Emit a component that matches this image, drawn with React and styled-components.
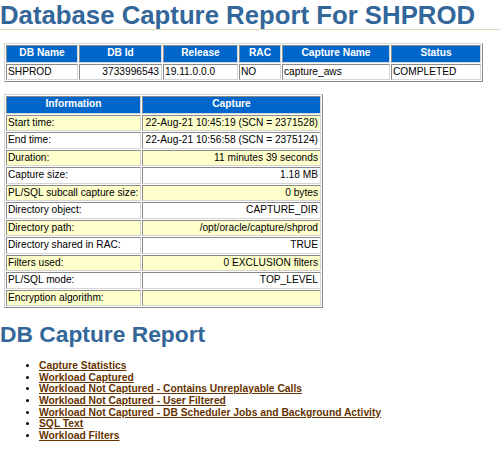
import React from "react";
import styled, { createGlobalStyle } from "styled-components";

const GlobalStyle = createGlobalStyle`
body {
  margin: 0;
  background: #ffffff;
  color: #000000;
  font-family: "Liberation Sans", Arial, Helvetica, sans-serif;
}
`;

const summaryCols = [
    { title: "DB Name", width: 72 },
    { title: "DB Id", width: 83, right: true },
    { title: "Release", width: 75 },
    { title: "RAC", width: 42 },
    { title: "Capture Name", width: 108 },
    { title: "Status", width: 90 },
];

const summaryRow = ["SHPROD", "3733996543", "19.11.0.0.0", "NO", "capture_aws", "COMPLETED"];

const infoRows = [
    ["Start time:", "22-Aug-21 10:45:19 (SCN = 2371528)"],
    ["End time:", "22-Aug-21 10:56:58 (SCN = 2375124)"],
    ["Duration:", "11 minutes 39 seconds"],
    ["Capture size:", "1.18 MB"],
    ["PL/SQL subcall capture size:", "0 bytes"],
    ["Directory object:", "CAPTURE_DIR"],
    ["Directory path:", "/opt/oracle/capture/shprod"],
    ["Directory shared in RAC:", "TRUE"],
    ["Filters used:", "0 EXCLUSION filters"],
    ["PL/SQL mode:", "TOP_LEVEL"],
    ["Encryption algorithm:", ""],
];

const links = [
    "Capture Statistics",
    "Workload Captured",
    "Workload Not Captured - Contains Unreplayable Calls",
    "Workload Not Captured - User Filtered",
    "Workload Not Captured - DB Scheduler Jobs and Background Activity",
    "SQL Text",
    "Workload Filters",
];

const App = () => {
    return (
        <>
        <GlobalStyle />
        <Title>Database Capture Report For SHPROD</Title>

        <Table $width={479} $top={13}>
            <tbody>
                <tr>
                    {summaryCols.map((c) => (
                        <Th key={c.title} $width={c.width}>{c.title}</Th>
                    ))}
                </tr>
                <tr>
                    {summaryRow.map((v, i) => (
                        <Td key={i} $right={summaryCols[i].right}>{v}</Td>
                    ))}
                </tr>
            </tbody>
        </Table>

        <Table $width={319} $top={12}>
            <tbody>
                <tr>
                    <Th $width={135}>Information</Th>
                    <Th $width={179}>Capture</Th>
                </tr>
                {infoRows.map((row, i) => (
                    <tr key={row[0]}>
                        <Td $shade={i % 2 === 0}>{row[0]}</Td>
                        <Td $shade={i % 2 === 0} $right>{row[1]}</Td>
                    </tr>
                ))}
            </tbody>
        </Table>

        <SubTitle>DB Capture Report</SubTitle>
        <LinkList>
            {links.map((l) => (
                <li key={l}><ReportLink href="#">{l}</ReportLink></li>
            ))}
        </LinkList>
        </>
    );
};

const Title = styled.h1`
margin: 0;
padding-top: 1px;
font-size: 25.75px;
font-weight: bold;
line-height: 28px;
color: #336699;
border-bottom: 1px solid #d9d9b6;
`;

const SubTitle = styled.h2`
margin: 13px 0 0 0;
font-size: 22.8px;
font-weight: bold;
line-height: 26px;
color: #336699;
`;

const Table = styled.table`
margin-top: ${(p) => p.$top}px;
margin-left: 4px;
width: ${(p) => p.$width}px;
table-layout: fixed;
border-collapse: separate;
border-spacing: 1px;
border: 1px solid;
border-color: #d4d4d4 #8a8a8a #8a8a8a #d4d4d4;
`;

const Th = styled.th`
box-sizing: border-box;
width: ${(p) => p.$width}px;
padding: 1px 4px 2px 4px;
font-size: 10.2px;
line-height: 12.5px;
font-weight: bold;
color: #ffffff;
background: #0066cc;
text-align: center;
border: 1px solid;
border-color: #8a8a8a #d4d4d4 #d4d4d4 #8a8a8a;
white-space: nowrap;
`;

const Td = styled.td`
box-sizing: border-box;
padding: 1px 2px 1px 1px;
font-size: 10.2px;
line-height: 12.5px;
height: 16.5px;
color: #000000;
background: ${(p) => (p.$shade ? "#ffffcc" : "#ffffff")};
text-align: ${(p) => (p.$right ? "right" : "left")};
vertical-align: top;
border: 1px solid;
border-color: #8a8a8a #d4d4d4 #d4d4d4 #8a8a8a;
white-space: nowrap;
overflow: hidden;
`;

const LinkList = styled.ul`
margin: 13px 0 0 0;
padding-left: 39px;
font-size: 10.3px;
line-height: 11.67px;
list-style: disc;
`;

const ReportLink = styled.a`
font-weight: bold;
color: #663300;
text-decoration: underline;
`;

export default App;
